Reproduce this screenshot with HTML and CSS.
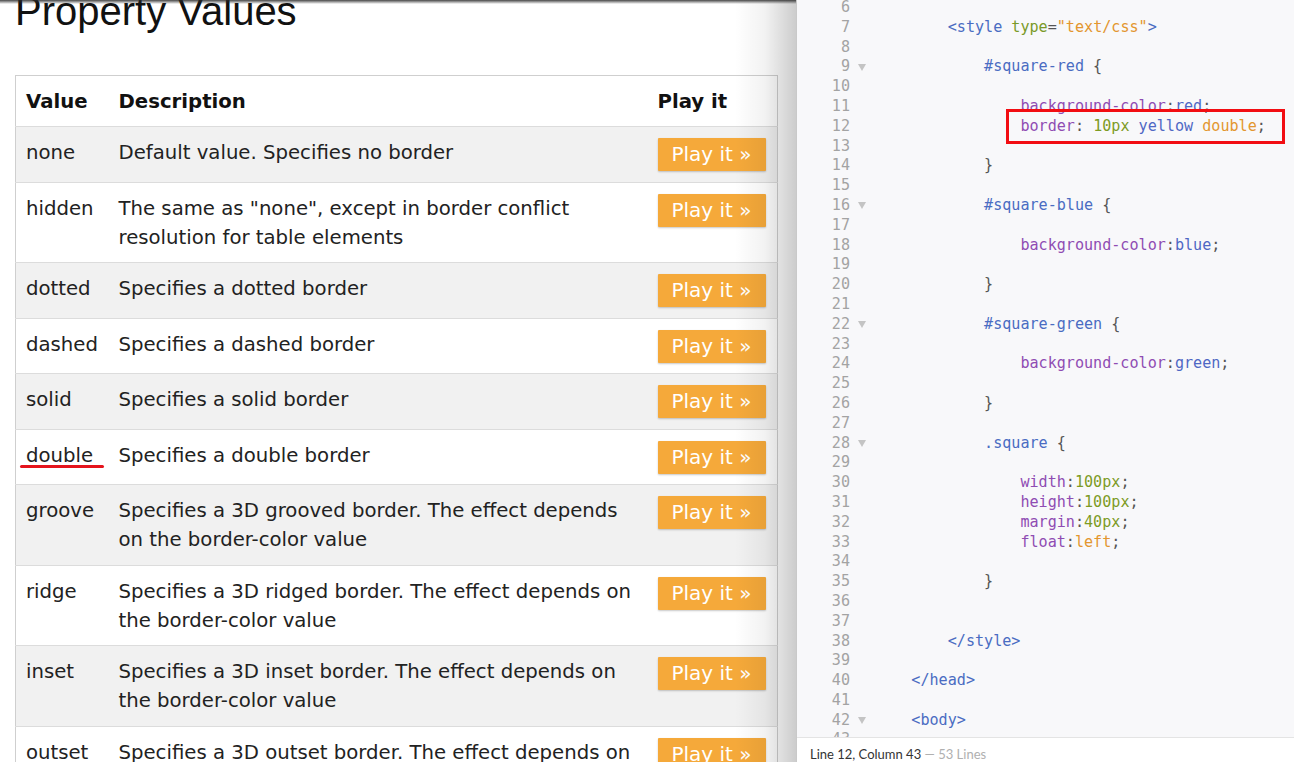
FILE: index.html
```html
<!DOCTYPE html>
<html lang="en">
<head>
<meta charset="utf-8">
<title>CSS border-style – Property Values</title>
<link rel="stylesheet" href="styles.css">
</head>
<body>
<div class="screen">
  <div class="page">
    <h1 class="title">Property Values</h1>
    <table class="props">
      <colgroup><col class="c-val"><col class="c-desc"><col class="c-play"></colgroup>
      <thead>
        <tr><th>Value</th><th>Description</th><th>Play it</th></tr>
      </thead>
      <tbody>
        <tr class="alt"><td>none</td><td class="desc">Default value. Specifies no border</td><td><span class="btn">Play it »</span></td></tr>
        <tr><td>hidden</td><td class="desc">The same as "none", except in border conflict<br>resolution for table elements</td><td><span class="btn">Play it »</span></td></tr>
        <tr class="alt"><td>dotted</td><td class="desc">Specifies a dotted border</td><td><span class="btn">Play it »</span></td></tr>
        <tr><td>dashed</td><td class="desc">Specifies a dashed border</td><td><span class="btn">Play it »</span></td></tr>
        <tr class="alt"><td>solid</td><td class="desc">Specifies a solid border</td><td><span class="btn">Play it »</span></td></tr>
        <tr><td><span class="mark">double</span></td><td class="desc">Specifies a double border</td><td><span class="btn">Play it »</span></td></tr>
        <tr class="alt"><td>groove</td><td class="desc">Specifies a 3D grooved border. The effect depends<br>on the border-color value</td><td><span class="btn">Play it »</span></td></tr>
        <tr><td>ridge</td><td class="desc">Specifies a 3D ridged border. The effect depends on<br>the border-color value</td><td><span class="btn">Play it »</span></td></tr>
        <tr class="alt"><td>inset</td><td class="desc">Specifies a 3D inset border. The effect depends on<br>the border-color value</td><td><span class="btn">Play it »</span></td></tr>
        <tr><td>outset</td><td class="desc">Specifies a 3D outset border. The effect depends on<br>the border-color value</td><td><span class="btn">Play it »</span></td></tr>
      </tbody>
    </table>
    <div class="shade"></div>
  </div>

  <div class="editor">
    <div class="code">
      <div class="ln"><span class="num">6</span><span class="fold"></span><span class="src"></span></div>
      <div class="ln"><span class="num">7</span><span class="fold"></span><span class="src">        <span class="tag">&lt;style</span> <span class="attr">type</span><span class="p">=</span><span class="str">"text/css"</span><span class="tag">&gt;</span></span></div>
      <div class="ln"><span class="num">8</span><span class="fold"></span><span class="src"></span></div>
      <div class="ln"><span class="num">9</span><span class="fold"><i class="tri"></i></span><span class="src">            <span class="sel">#square-red</span> <span class="p">{</span></span></div>
      <div class="ln"><span class="num">10</span><span class="fold"></span><span class="src"></span></div>
      <div class="ln"><span class="num">11</span><span class="fold"></span><span class="src">                <span class="prop">background-color</span><span class="p">:</span><span class="kw">red</span><span class="p">;</span></span></div>
      <div class="ln"><span class="num">12</span><span class="fold"></span><span class="src">                <span class="boxed"><span class="prop">border</span><span class="p">:</span> <span class="num-v">10px</span> <span class="kw">yellow</span> <span class="str">double</span><span class="p">;</span></span></span></div>
      <div class="ln"><span class="num">13</span><span class="fold"></span><span class="src"></span></div>
      <div class="ln"><span class="num">14</span><span class="fold"></span><span class="src">            <span class="p">}</span></span></div>
      <div class="ln"><span class="num">15</span><span class="fold"></span><span class="src"></span></div>
      <div class="ln"><span class="num">16</span><span class="fold"><i class="tri"></i></span><span class="src">            <span class="sel">#square-blue</span> <span class="p">{</span></span></div>
      <div class="ln"><span class="num">17</span><span class="fold"></span><span class="src"></span></div>
      <div class="ln"><span class="num">18</span><span class="fold"></span><span class="src">                <span class="prop">background-color</span><span class="p">:</span><span class="kw">blue</span><span class="p">;</span></span></div>
      <div class="ln"><span class="num">19</span><span class="fold"></span><span class="src"></span></div>
      <div class="ln"><span class="num">20</span><span class="fold"></span><span class="src">            <span class="p">}</span></span></div>
      <div class="ln"><span class="num">21</span><span class="fold"></span><span class="src"></span></div>
      <div class="ln"><span class="num">22</span><span class="fold"><i class="tri"></i></span><span class="src">            <span class="sel">#square-green</span> <span class="p">{</span></span></div>
      <div class="ln"><span class="num">23</span><span class="fold"></span><span class="src"></span></div>
      <div class="ln"><span class="num">24</span><span class="fold"></span><span class="src">                <span class="prop">background-color</span><span class="p">:</span><span class="kw">green</span><span class="p">;</span></span></div>
      <div class="ln"><span class="num">25</span><span class="fold"></span><span class="src"></span></div>
      <div class="ln"><span class="num">26</span><span class="fold"></span><span class="src">            <span class="p">}</span></span></div>
      <div class="ln"><span class="num">27</span><span class="fold"></span><span class="src"></span></div>
      <div class="ln"><span class="num">28</span><span class="fold"><i class="tri"></i></span><span class="src">            <span class="sel">.square</span> <span class="p">{</span></span></div>
      <div class="ln"><span class="num">29</span><span class="fold"></span><span class="src"></span></div>
      <div class="ln"><span class="num">30</span><span class="fold"></span><span class="src">                <span class="prop">width</span><span class="p">:</span><span class="num-v">100px</span><span class="p">;</span></span></div>
      <div class="ln"><span class="num">31</span><span class="fold"></span><span class="src">                <span class="prop">height</span><span class="p">:</span><span class="num-v">100px</span><span class="p">;</span></span></div>
      <div class="ln"><span class="num">32</span><span class="fold"></span><span class="src">                <span class="prop">margin</span><span class="p">:</span><span class="num-v">40px</span><span class="p">;</span></span></div>
      <div class="ln"><span class="num">33</span><span class="fold"></span><span class="src">                <span class="prop">float</span><span class="p">:</span><span class="str">left</span><span class="p">;</span></span></div>
      <div class="ln"><span class="num">34</span><span class="fold"></span><span class="src"></span></div>
      <div class="ln"><span class="num">35</span><span class="fold"></span><span class="src">            <span class="p">}</span></span></div>
      <div class="ln"><span class="num">36</span><span class="fold"></span><span class="src"></span></div>
      <div class="ln"><span class="num">37</span><span class="fold"></span><span class="src"></span></div>
      <div class="ln"><span class="num">38</span><span class="fold"></span><span class="src">        <span class="tag">&lt;/style&gt;</span></span></div>
      <div class="ln"><span class="num">39</span><span class="fold"></span><span class="src"></span></div>
      <div class="ln"><span class="num">40</span><span class="fold"></span><span class="src">    <span class="tag">&lt;/head&gt;</span></span></div>
      <div class="ln"><span class="num">41</span><span class="fold"></span><span class="src"></span></div>
      <div class="ln"><span class="num">42</span><span class="fold"><i class="tri"></i></span><span class="src">    <span class="tag">&lt;body&gt;</span></span></div>
      <div class="ln"><span class="num">43</span><span class="fold"></span><span class="src"></span></div>
    </div>
    <div class="status">Line 12, Column 43 <span class="dim">— 53 Lines</span></div>
  </div>
</div>
</body>
</html>
```

FILE: styles.css
```css
html, body {
  margin: 0;
  padding: 0;
  background: #fff;
}

.screen {
  display: flex;
  width: 1294px;
  height: 762px;
  overflow: hidden;
}

/* ---------- left: documentation page ---------- */
.page {
  position: relative;
  flex: none;
  width: 796px;
  height: 762px;
  overflow: hidden;
  background: #fff;
}

.title {
  margin: -9px 0 44px 0;
  padding-left: 15px;
  font-family: "Liberation Sans", Arial, sans-serif;
  font-weight: normal;
  font-size: 40px;
  line-height: 40px;
  color: #111;
}

.props {
  margin-left: 15px;
  width: 763px;
  table-layout: fixed;
  border-collapse: collapse;
  border: 1px solid #cfcfcf;
  font-family: "DejaVu Sans", Verdana, sans-serif;
  font-size: 19.7px;
  line-height: 29px;
  color: #222;
}

.c-val { width: 93px; }
.c-play { width: 130px; }

.props th,
.props td {
  padding: 11px 10px 10.5px 10px;
  text-align: left;
  vertical-align: top;
  border-bottom: 1px solid #dcdcdc;
}

.props th {
  padding-bottom: 10px;
  font-weight: bold;
  color: #111;
  background: #fff;
}

.props tr.alt td {
  background: #f1f1f1;
}

.desc {
  white-space: nowrap;
}

.btn {
  display: block;
  width: 108px;
  height: 33px;
  background: #f5a93a;
  color: #fff;
  font-size: 20px;
  text-align: center;
  line-height: 33px;
  border-radius: 1px;
  box-shadow: 0 1px 2px rgba(0, 0, 0, 0.22);
}

.mark {
  position: relative;
}

.mark::after {
  content: "";
  position: absolute;
  left: -6px;
  right: -11px;
  top: 21px;
  height: 3px;
  border-radius: 2px;
  background: #e5141c;
}

.shade {
  position: absolute;
  inset: 0;
  pointer-events: none;
  background: linear-gradient(to right,
    rgba(0, 0, 0, 0) 735px,
    rgba(0, 0, 0, 0.05) 765px,
    rgba(0, 0, 0, 0.2) 796px);
}

.shade::before {
  content: "";
  position: absolute;
  left: 0;
  right: 0;
  top: 0;
  height: 4px;
  background: linear-gradient(to bottom, rgba(40, 40, 40, 0.85), rgba(40, 40, 40, 0));
}

/* ---------- right: code editor ---------- */
.editor {
  flex: 1;
  display: flex;
  flex-direction: column;
  background: #f8f8fa;
  border-left: 1px solid #c9c9c9;
  min-width: 0;
}

.code {
  flex: 1;
  overflow: hidden;
  font-family: "DejaVu Sans Mono", "Liberation Mono", monospace;
  font-size: 15.1px;
  color: #444;
}

.code .ln:first-child {
  margin-top: -2px;
}

.ln {
  display: flex;
  height: 19.8px;
  line-height: 19.8px;
}

.num {
  flex: none;
  width: 53px;
  text-align: right;
  color: #a3a3a3;
}

.fold {
  flex: none;
  width: 25px;
  display: flex;
  align-items: center;
}

.tri {
  display: block;
  margin-left: 8px;
  width: 0;
  height: 0;
  border-left: 4px solid transparent;
  border-right: 4px solid transparent;
  border-top: 7px solid #c4c4c4;
}

.src {
  white-space: pre;
}

.tag { color: #4a6cc2; }
.sel { color: #4a6cc2; }
.attr { color: #7a9a28; }
.str { color: #e3962f; }
.prop { color: #8f4cb3; }
.kw { color: #4f67c4; }
.num-v { color: #7d9b24; }
.p { color: #555; }

.boxed {
  position: relative;
}

.boxed::after {
  content: "";
  position: absolute;
  left: -14px;
  right: -19px;
  top: -8px;
  bottom: -9px;
  border: 3px solid #f20d12;
}

.status {
  flex: none;
  height: 24px;
  padding-left: 13px;
  background: #fff;
  border-top: 1px solid #e4e4e4;
  font-family: "Lato", "Open Sans", sans-serif;
  font-size: 13px;
  line-height: 32px;
  overflow: hidden;
  color: #333;
}

.status .dim {
  color: #b0b0b0;
}
```
